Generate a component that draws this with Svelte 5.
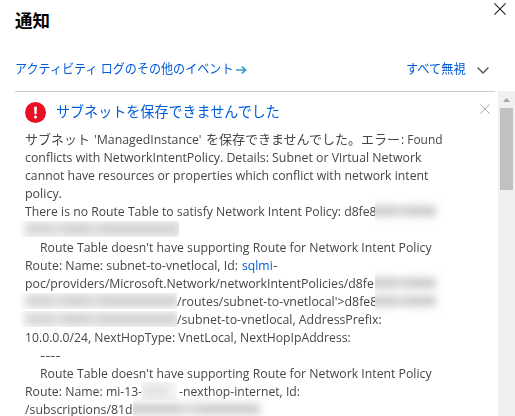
<script>
  // Each run carries the width it occupies and the gap before it, in pixels.
  const lines = [
    [
      { t: 'サブネット', w: 65 },
      { t: "'ManagedInstance'", w: 108, gap: 4 },
      { t: 'を保存できませんでした。エラー', w: 194, gap: 4 },
      { t: ': Found', w: 42, gap: 1 }
    ],
    [{ t: 'conflicts with NetworkIntentPolicy. Details: Subnet or Virtual Network', w: 396 }],
    [{ t: 'cannot have resources or properties which conflict with network intent', w: 403 }],
    [{ t: 'policy.', w: 37 }],
    [
      { t: 'There is no Route Table to satisfy Network Intent Policy: d8fe8', w: 352 },
      { smear: 'right', w: 64, gap: -2 }
    ],
    [{ smear: 'left', w: 154 }],
    [{ t: "Route Table doesn't have supporting Route for Network Intent Policy", w: 392, gap: 15 }],
    [
      { t: 'Route: Name: subnet-to-vnetlocal, Id:', w: 213 },
      { t: 'sqlmi', w: 30.5, gap: 4, link: true },
      { t: '-', w: 4.5, gap: 0.5 }
    ],
    [
      { t: 'poc/providers/Microsoft.Network/networkIntentPolicies/d8fe', w: 349 },
      { smear: 'right', w: 64, gap: 1 }
    ],
    [
      { smear: 'left', w: 152 },
      { t: "/routes/subnet-to-vnetlocal'>d8fe8", w: 200 },
      { smear: 'right', w: 64, gap: -2 }
    ],
    [
      { smear: 'left', w: 152 },
      { t: '/subnet-to-vnetlocal, AddressPrefix:', w: 205 }
    ],
    [{ t: '10.0.0.0/24, NextHopType: VnetLocal, NextHopIpAddress:', w: 326 }],
    [{ t: '----', w: 20, gap: 15 }],
    [{ t: "Route Table doesn't have supporting Route for Network Intent Policy", w: 392, gap: 15 }],
    [
      { t: 'Route: Name: mi-13-', w: 117 },
      { smear: 'mid', w: 36, gap: -1 },
      { t: '-nexthop-internet, Id:', w: 121, gap: 2 }
    ],
    [
      { t: '/subscriptions/81d', w: 108 },
      { smear: 'right', w: 130 }
    ]
  ];

  function fit(node, width) {
    const apply = () => {
      node.style.transform = 'none';
      const natural = node.offsetWidth;
      if (natural) node.style.transform = `scaleX(${width / natural})`;
    };
    apply();
    document.fonts?.ready.then(apply);
  }
</script>

<div class="panel">
  <header>
    <h1><span class="run" use:fit={35}>通知</span></h1>
    <svg class="close" viewBox="0 0 12 12"><path d="M.4.4 11.6 11.6M11.6.4.4 11.6" /></svg>
  </header>

  <nav>
    <a class="more" href="#log">
      <span class="cell" style:width="219px"><span class="run" use:fit={219}>アクティビティ ログのその他のイベント</span></span>
      <svg class="arrow" viewBox="0 0 11 8"><path d="M0 4H9.5M6 .6 9.5 4 6 7.4" /></svg>
    </a>
    <a class="dismiss" href="#all">
      <span class="cell" style:width="60px"><span class="run" use:fit={60}>すべて無視</span></span>
      <svg class="chevron" viewBox="0 0 12 7"><path d="M.6.6 6 6 11.4.6" /></svg>
    </a>
  </nav>

  <div class="body">
    <article>
      <div class="heading">
        <svg class="error" viewBox="0 0 21 21">
          <circle cx="10.5" cy="10.5" r="10.5" fill="#e81123" />
          <path d="M9.1 4.8h2.8l-.4 7.4H9.5z" fill="#fff" />
          <circle cx="10.5" cy="14.9" r="1.5" fill="#fff" />
        </svg>
        <h2><span class="run" use:fit={224}>サブネットを保存できませんでした</span></h2>
        <svg class="remove" viewBox="0 0 10 10"><path d="M.3.3 9.7 9.7M9.7.3.3 9.7" /></svg>
      </div>
      <div class="message">
        {#each lines as line}
          <div class="line">
            {#each line as r}
              {#if r.smear}
                <span class="smear {r.smear}" style:width="{r.w}px" style:margin-left="{r.gap ?? 0}px"><i></i></span>
              {:else}
                <span class="cell" class:link={r.link} style:width="{r.w}px" style:margin-left="{r.gap ?? 0}px"><span class="run" use:fit={r.w}>{r.t}</span></span>
              {/if}
            {/each}
          </div>
        {/each}
      </div>
    </article>
    <div class="scrollbar">
      <svg viewBox="0 0 7 4"><path d="M3.5 0 7 4H0z" /></svg>
      <div class="thumb"></div>
    </div>
  </div>
</div>

<style>
  :global(body) {
    margin: 0;
    background: #fff;
  }
  .panel {
    width: 515px;
    height: 416px;
    display: flex;
    flex-direction: column;
    overflow: hidden;
    background: #fff;
    color: #484644;
    font-family: 'Open Sans', 'Noto Sans CJK JP', sans-serif;
    font-size: 12.8px;
  }
  header {
    height: 41px;
    flex: none;
    display: flex;
    justify-content: space-between;
    align-items: flex-start;
    padding: 0 9px 0 15px;
    box-sizing: border-box;
  }
  h1, h2 {
    margin: 0;
    white-space: nowrap;
  }
  h1 {
    font-size: 17.5px;
    line-height: 24px;
    font-weight: 700;
    color: #000;
    padding-top: 8px;
  }
  svg {
    display: block;
    flex: none;
    fill: none;
  }
  .close {
    width: 12px;
    height: 12px;
    margin-top: 3px;
    stroke: #222;
    stroke-width: 1.1;
  }
  nav {
    height: 51px;
    flex: none;
    margin-left: 15px;
    width: 480px;
    display: flex;
    justify-content: space-between;
    box-sizing: border-box;
    border-bottom: 1px solid #ccc;
    padding: 17px 6px 0 0;
    line-height: 20px;
  }
  nav a {
    display: flex;
    align-items: center;
    height: 20px;
    color: #015cda;
    text-decoration: none;
  }
  .arrow {
    width: 11px;
    height: 8px;
    margin: 4px 0 0 2px;
    stroke: #3999c6;
    stroke-width: 1.6;
  }
  .chevron {
    width: 12px;
    height: 7px;
    margin: 4px 0 0 11px;
    stroke: #555;
    stroke-width: 1.4;
  }
  .body {
    flex: 1;
    display: flex;
    justify-content: space-between;
    min-height: 0;
  }
  article {
    width: 480px;
    padding-left: 15px;
  }
  .heading {
    height: 38px;
    display: flex;
    align-items: flex-start;
    padding-left: 10px;
    box-sizing: border-box;
  }
  .error {
    width: 21px;
    height: 21px;
    margin-top: 10px;
  }
  h2 {
    width: 224px;
    margin: 9px 0 0 10px;
    font-size: 14.5px;
    font-weight: 400;
    line-height: 22px;
    color: #015cda;
  }
  .remove {
    width: 10px;
    height: 10px;
    margin: 12px 5px 0 auto;
    stroke: #aaa;
    stroke-width: 1;
  }
  .message {
    padding-left: 10px;
  }
  .line {
    display: flex;
    height: 18px;
    line-height: 18px;
  }
  .cell {
    flex: none;
    display: block;
    white-space: pre;
  }
  .run {
    display: inline-block;
    white-space: pre;
    transform-origin: 0 50%;
  }
  .link {
    color: #015cda;
  }
  .smear {
    position: relative;
    flex: none;
    height: 18px;
    clip-path: inset(-7px -14px -7px 0);
    background: linear-gradient(#fff, #fff) 0 0 / 3px 100% no-repeat;
  }
  .smear i {
    display: block;
    height: 10px;
    margin: 0 3px 0 -6px;
    background: linear-gradient(90deg, #c8c8c8 0 38%, #d8d8d8 44% 49%, #c8c8c8 56% 100%);
    filter: blur(4.5px);
    position: relative;
    top: 4px;
  }
  .left {
    background: #f8f8f8;
    box-shadow: -3px 0 3px #f8f8f8;
    clip-path: inset(1px 0 1px -10px);
  }
  .left i {
    margin: 0 -1px 0 1px;
    background: linear-gradient(90deg, #cfcfcf 0 17%, #dedede 20% 22%, #cccccc 25% 41%, #dadada 43% 46%, #cccccc 49% 100%);
  }
  .mid {
    background: #f6f6f6;
    clip-path: inset(0);
  }
  .mid i {
    margin: 0 8px 0 2px;
    background: #e0e0e0;
  }
  .scrollbar {
    width: 17px;
    margin: -1px 0 0 auto;
    background: #f0f0f0;
    display: flex;
    flex-direction: column;
    align-items: center;
  }
  .scrollbar svg {
    width: 7px;
    height: 4px;
    margin: 7px 0 6px;
  }
  .scrollbar path {
    fill: #a3a3a3;
  }
  .thumb {
    width: 13px;
    height: 82px;
    background: #c1c1c1;
  }
</style>
